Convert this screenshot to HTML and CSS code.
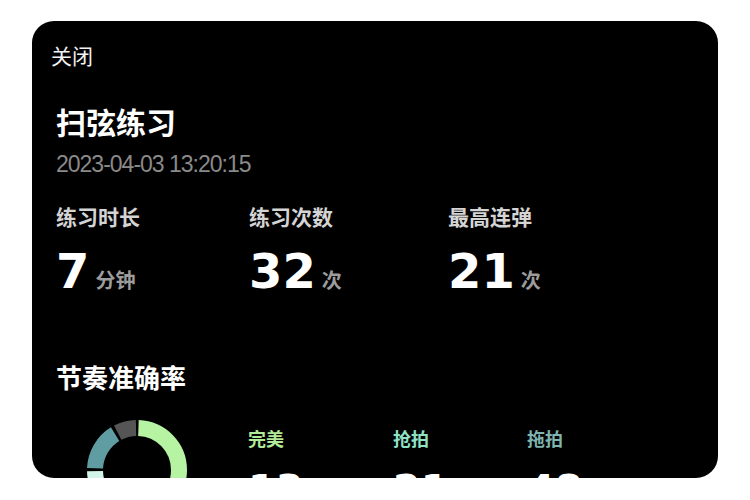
FILE: index.html
```html
<!DOCTYPE html>
<html lang="zh-CN">
<head>
<meta charset="utf-8">
<title>扫弦练习</title>
<link rel="stylesheet" href="styles.css">
</head>
<body>
<div class="card">
  <div class="close">关闭</div>
  <div class="content">
    <h1 class="title">扫弦练习</h1>
    <div class="date">2023-04-03 13:20:15</div>
    <div class="stats">
      <div class="stat">
        <div class="stat-label">练习时长</div>
        <div class="stat-value"><span class="num">7</span><span class="unit">分钟</span></div>
      </div>
      <div class="stat">
        <div class="stat-label">练习次数</div>
        <div class="stat-value"><span class="num">32</span><span class="unit">次</span></div>
      </div>
      <div class="stat">
        <div class="stat-label">最高连弹</div>
        <div class="stat-value"><span class="num">21</span><span class="unit">次</span></div>
      </div>
    </div>
    <h2 class="section-title">节奏准确率</h2>
    <div class="accuracy">
      <div class="ring-col">
        <svg class="ring" width="100" height="100" viewBox="0 0 100 100">
          <g transform="rotate(-90 50 50)" fill="none" stroke-width="16">
            <circle cx="50" cy="50" r="42" stroke="#b6f4a3" stroke-dasharray="129.0 263.9" stroke-dashoffset="-1.47"/>
            <circle cx="50" cy="50" r="42" stroke="#d2f4e9" stroke-dasharray="63.05 263.9" stroke-dashoffset="-133.4"/>
            <circle cx="50" cy="50" r="42" stroke="#5f9da2" stroke-dasharray="41.05 263.9" stroke-dashoffset="-199.4"/>
            <circle cx="50" cy="50" r="42" stroke="#555555" stroke-dasharray="19.06 263.9" stroke-dashoffset="-243.4"/>
          </g>
        </svg>
      </div>
      <div class="legend">
        <div class="legend-item">
          <div class="legend-label perfect">完美</div>
          <div class="legend-num">13</div>
        </div>
        <div class="legend-item">
          <div class="legend-label early">抢拍</div>
          <div class="legend-num">21</div>
        </div>
        <div class="legend-item">
          <div class="legend-label late">拖拍</div>
          <div class="legend-num">48</div>
        </div>
      </div>
    </div>
  </div>
</div>
</body>
</html>
```

FILE: styles.css
```css
html, body {
  margin: 0;
  padding: 0;
  background: #ffffff;
}

body {
  padding: 21px 32px;
  font-family: "Noto Sans CJK SC", "Noto Sans", sans-serif;
}

.card {
  width: 686px;
  height: 457px;
  background: #000000;
  border-radius: 22px;
  overflow: hidden;
  box-sizing: border-box;
  padding: 19px 0 0 0;
  color: #ffffff;
}

.close {
  margin-left: 19px;
  font-size: 21px;
  line-height: 30px;
  font-weight: 400;
  color: #f2f2f2;
}

.content {
  padding-left: 24px;
}

.title {
  margin: 31px 0 0 0;
  font-size: 30px;
  line-height: 40px;
  font-weight: 700;
  color: #ffffff;
}

.date {
  margin-top: 10px;
  font-family: "Liberation Sans", Arial, sans-serif;
  font-size: 23px;
  line-height: 26px;
  letter-spacing: -1px;
  color: #8a8a8a;
}

.stats {
  margin-top: 25px;
  display: grid;
  grid-template-columns: 193px 199px 1fr;
}

.stat-label {
  font-size: 21px;
  line-height: 28px;
  font-weight: 700;
  color: #d4d4d4;
}

.stat-value {
  margin-top: 13px;
  display: flex;
  align-items: baseline;
}

.num {
  font-family: "DejaVu Sans", sans-serif;
  font-weight: 700;
  font-size: 48px;
  line-height: 56px;
  color: #ffffff;
}

.unit {
  margin-left: 6px;
  font-size: 20px;
  font-weight: 700;
  color: #9c9c9c;
}

.section-title {
  margin: 61px 0 0 0;
  font-size: 26px;
  line-height: 34px;
  font-weight: 700;
  color: #ffffff;
}

.accuracy {
  margin-top: 26px;
  display: flex;
}

.ring-col {
  width: 192px;
  flex: none;
}

.ring {
  display: block;
  margin-left: 31px;
}

.legend {
  display: grid;
  grid-template-columns: 145px 134px 1fr;
  padding-top: 6px;
}

.legend-label {
  font-size: 18px;
  line-height: 24px;
  font-weight: 700;
}

.perfect { color: #b2ea98; }
.early { color: #8fe2c6; }
.late { color: #7fb5b0; }

.legend-num {
  margin-top: 18px;
  font-family: "DejaVu Sans", sans-serif;
  font-weight: 700;
  font-size: 40px;
  line-height: 44px;
  color: #ffffff;
}
```
